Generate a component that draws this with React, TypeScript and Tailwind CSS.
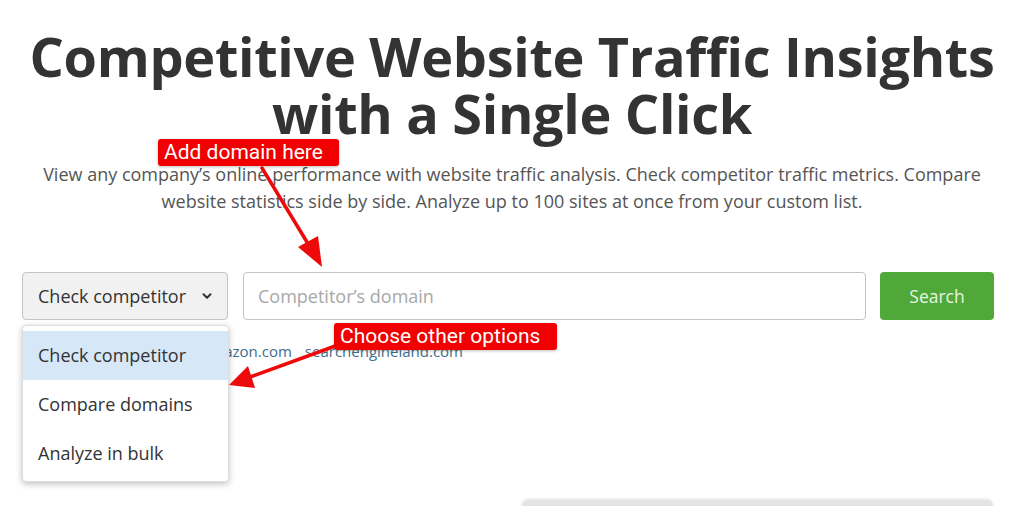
import React from "react";

export default function App() {
  return (
    <div className="relative w-[1024px] h-[506px] overflow-hidden bg-white" style={{ fontFamily: '"Open Sans", "DejaVu Sans", sans-serif' }}>
      <div className="flex flex-col items-center pt-[28px]">
        <h1 className="text-center font-bold text-[#333333] text-[54px] leading-[57px] tracking-[-0.3px]">
          Competitive Website Traffic Insights
          <br />
          with a Single Click
        </h1>
        <p className="mt-[19px] text-center text-[#555555] text-[18px] leading-[27px]">
          View any company’s online performance with website traffic analysis. Check competitor traffic metrics. Compare
          <br />
          website statistics side by side. Analyze up to 100 sites at once from your custom list.
        </p>
      </div>

      <div className="mt-[57px] flex items-stretch pl-[22px]">
        <button className="flex h-[48px] w-[206px] items-center justify-between rounded-[4px] border border-[#c4c4c4] bg-[#f1f1f1] pl-[15px] pr-[13px] text-[18px] text-[#333333]">
          <span>Check competitor</span>
          <svg width="14" height="14" viewBox="0 0 24 24" fill="none" stroke="#333" strokeWidth="3.5" strokeLinecap="round" strokeLinejoin="round">
            <path d="M6 9l6 6 6-6" />
          </svg>
        </button>
        <div className="ml-[15px] flex h-[48px] w-[623px] items-center rounded-[4px] border border-[#c4c4c4] bg-white pl-[14px] text-[18px] text-[#a8a8a8]">
          Competitor’s domain
        </div>
        <button className="ml-[14px] h-[48px] w-[114px] rounded-[4px] bg-[#50a83a] text-[17.5px] text-[#e6f6e0]">
          Search
        </button>
      </div>

      <div className="mt-[21px] flex gap-[13px] pl-[202px] text-[15px] leading-[20px] text-[#3c6e8c]">
        <span>amazon.com</span>
        <span>searchengineland.com</span>
      </div>

      <div className="ml-[522px] mt-[139px] h-[20px] w-[471px] rounded-t-[6px] bg-[#e4e4e4] shadow-[0_-1px_3px_rgba(0,0,0,0.12)]" />

      {/* Dropdown menu overlay */}
      <div className="absolute left-[22px] top-[325px] w-[207px] rounded-[4px] border border-[#dedede] bg-white pt-[5px] pb-[3px] shadow-[0_2px_6px_rgba(0,0,0,0.25)] text-[18px] text-[#333333]">
        <div className="flex h-[49px] items-center bg-[#d6e7f8] pl-[15px]">Check competitor</div>
        <div className="flex h-[49px] items-center pl-[15px]">Compare domains</div>
        <div className="flex h-[49px] items-center pl-[15px]">Analyze in bulk</div>
      </div>

      {/* Arrows */}
      <svg className="absolute left-0 top-0 pointer-events-none" width="1024" height="506" viewBox="0 0 1024 506">
        <line x1="262" y1="168" x2="310" y2="247" stroke="#ee0a0a" strokeWidth="3.5" strokeLinecap="round" />
        <polygon points="322,267 298,247 318,236" fill="#ee0a0a" />
        <line x1="338" y1="345" x2="250" y2="377" stroke="#ee0a0a" strokeWidth="3.5" strokeLinecap="round" />
        <polygon points="229,385 248,366 255,388" fill="#ee0a0a" />
      </svg>

      {/* Annotation labels */}
      <div className="absolute left-[158px] top-[139px] flex h-[27px] w-[181px] items-center rounded-[3px] bg-[#f00000] pl-[6px] text-[21px] text-white shadow-[0_1px_3px_rgba(0,0,0,0.25)]" style={{ fontFamily: 'Roboto, "Liberation Sans", sans-serif' }}>
        Add domain here
      </div>
      <div className="absolute left-[334px] top-[323px] flex h-[27px] w-[223px] items-center rounded-[3px] bg-[#f00000] pl-[6px] text-[21px] text-white shadow-[0_1px_3px_rgba(0,0,0,0.25)]" style={{ fontFamily: 'Roboto, "Liberation Sans", sans-serif' }}>
        Choose other options
      </div>
    </div>
  );
}
